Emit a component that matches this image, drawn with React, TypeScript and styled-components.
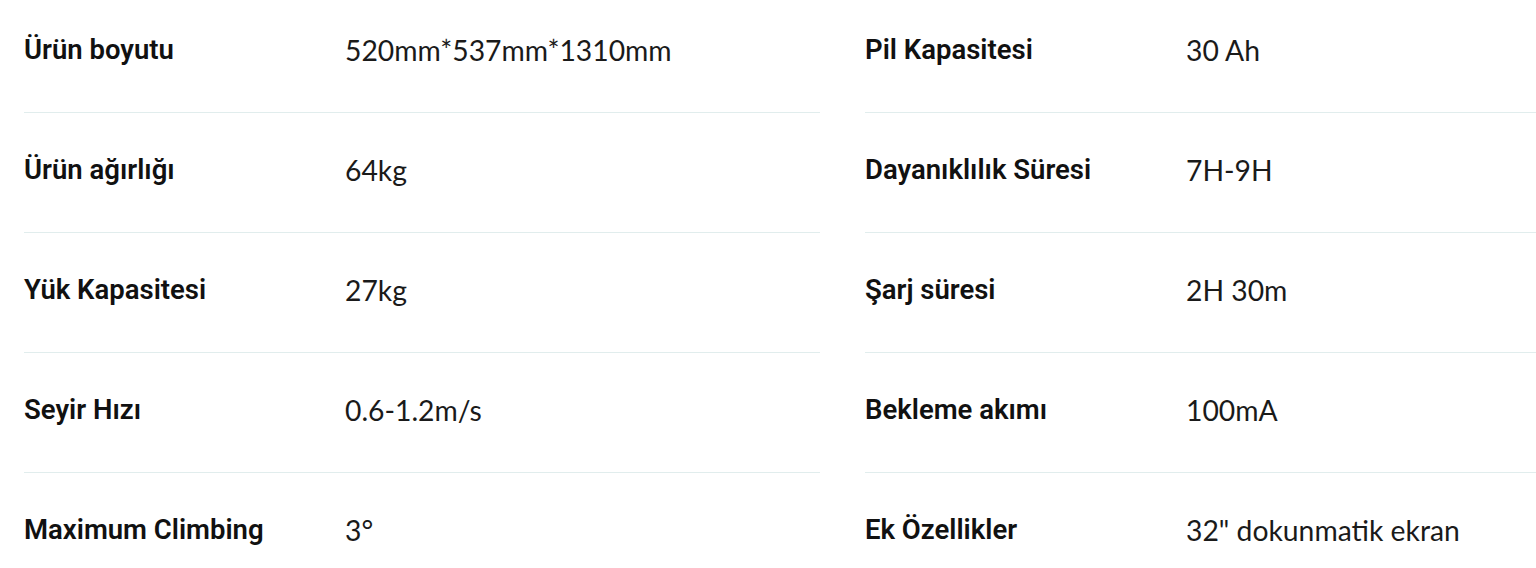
import { FC } from 'react';
import styled, { createGlobalStyle } from 'styled-components';

const GlobalStyle = createGlobalStyle`
  html, body {
    margin: 0;
    padding: 0;
    background: #ffffff;
    overflow: hidden;
  }
`;

const Page = styled.div`
  width: 1536px;
  height: 568px;
  overflow: hidden;
`;

const SpecGrid = styled.div`
  display: grid;
  grid-template-columns: 796px 796px;
  column-gap: 45px;
  margin-top: -7px;
  padding-left: 24px;
`;

const Column = styled.div`
  display: flex;
  flex-direction: column;
`;

const Row = styled.div<{ $last?: boolean }>`
  display: flex;
  align-items: center;
  height: 119px;
  border-bottom: 1px solid ${(p) => (p.$last ? 'transparent' : '#e1eded')};
`;

const Label = styled.div`
  width: 321px;
  flex-shrink: 0;
  font-family: Roboto, 'Liberation Sans', sans-serif;
  font-weight: 600;
  font-size: 27.5px;
  line-height: 32px;
  color: #111111;
  margin-top: -6px;
`;

const Value = styled.div`
  font-family: Lato, 'Open Sans', sans-serif;
  font-weight: 400;
  font-size: 28.3px;
  line-height: 32px;
  color: #1a1a1a;
  margin-top: -6px;
`;

type Spec = { label: string; value: string };

const left: Spec[] = [
  { label: 'Ürün boyutu', value: '520mm*537mm*1310mm' },
  { label: 'Ürün ağırlığı', value: '64kg' },
  { label: 'Yük Kapasitesi', value: '27kg' },
  { label: 'Seyir Hızı', value: '0.6-1.2m/s' },
  { label: 'Maximum Climbing', value: '3°' },
];

const right: Spec[] = [
  { label: 'Pil Kapasitesi', value: '30 Ah' },
  { label: 'Dayanıklılık Süresi', value: '7H-9H' },
  { label: 'Şarj süresi', value: '2H 30m' },
  { label: 'Bekleme akımı', value: '100mA' },
  { label: 'Ek Özellikler', value: '32" dokunmatik ekran' },
];

const SpecColumn: FC<{ items: Spec[] }> = ({ items }) => (
  <Column>
    {items.map((s, i) => (
      <Row key={s.label} $last={i === items.length - 1}>
        <Label>{s.label}</Label>
        <Value>{s.value}</Value>
      </Row>
    ))}
  </Column>
);

const App: FC = () => (
  <Page>
    <GlobalStyle />
    <SpecGrid>
      <SpecColumn items={left} />
      <SpecColumn items={right} />
    </SpecGrid>
  </Page>
);

export default App;
